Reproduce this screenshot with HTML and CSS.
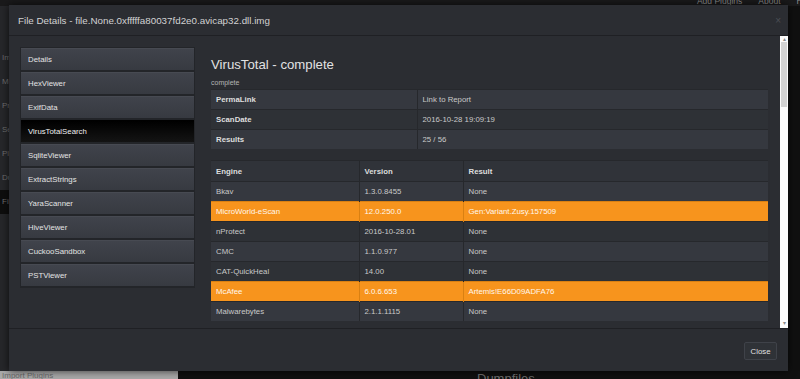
FILE: index.html
```html
<!DOCTYPE html>
<html>
<head>
<meta charset="utf-8">
<link rel="stylesheet" href="styles.css">
</head>
<body>
<div class="app">
  <header class="topbar">
    <nav class="toplinks"><span>Add Plugins</span><span>About</span><span>Help</span></nav>
  </header>
  <div class="layout">
    <aside class="side">
      <div class="side-item">Image</div>
      <div class="side-item">Memory</div>
      <div class="side-item">Profile</div>
      <div class="side-item">Session</div>
      <div class="side-item">Plugins</div>
      <div class="side-item">Dump</div>
      <div class="side-item dark">Files</div>
      <div class="side-item light">Import Plugins</div>
    </aside>
    <main class="main">
      <h2 class="dump">Dumpfiles</h2>
    </main>
  </div>
</div>

<div class="modal">
  <div class="modal-header">
    <span class="modal-title">File Details - file.None.0xfffffa80037fd2e0.avicap32.dll.img</span>
    <span class="modal-x">×</span>
  </div>
  <div class="modal-body">
    <div class="body-main">
      <ul class="nav">
        <li class="nav-item">Details</li>
        <li class="nav-item">HexViewer</li>
        <li class="nav-item">ExifData</li>
        <li class="nav-item active">VirusTotalSearch</li>
        <li class="nav-item">SqliteViewer</li>
        <li class="nav-item">ExtractStrings</li>
        <li class="nav-item">YaraScanner</li>
        <li class="nav-item">HiveViewer</li>
        <li class="nav-item">CuckooSandbox</li>
        <li class="nav-item">PSTViewer</li>
      </ul>
      <section class="content">
        <h2 class="vt-title">VirusTotal - complete</h2>
        <div class="vt-sub">complete</div>
        <table class="tbl info">
          <colgroup><col class="c-label"><col></colgroup>
          <tr class="alt"><td class="b">PermaLink</td><td>Link to Report</td></tr>
          <tr><td class="b">ScanDate</td><td>2016-10-28 19:09:19</td></tr>
          <tr class="alt"><td class="b">Results</td><td>25 / 56</td></tr>
        </table>
        <table class="tbl engines">
          <colgroup><col class="c-engine"><col class="c-version"><col></colgroup>
          <tr class="head"><td class="b">Engine</td><td class="b">Version</td><td class="b">Result</td></tr>
          <tr class="alt"><td>Bkav</td><td>1.3.0.8455</td><td>None</td></tr>
          <tr class="hit"><td>MicroWorld-eScan</td><td>12.0.250.0</td><td>Gen:Variant.Zusy.157509</td></tr>
          <tr><td>nProtect</td><td>2016-10-28.01</td><td>None</td></tr>
          <tr class="alt"><td>CMC</td><td>1.1.0.977</td><td>None</td></tr>
          <tr><td>CAT-QuickHeal</td><td>14.00</td><td>None</td></tr>
          <tr class="hit"><td>McAfee</td><td>6.0.6.653</td><td>Artemis!E66D09ADFA76</td></tr>
          <tr class="alt"><td>Malwarebytes</td><td>2.1.1.1115</td><td>None</td></tr>
        </table>
      </section>
    </div>
    <div class="scrollbar">
      <div class="sb-arrow">▴</div>
      <div class="sb-thumb"></div>
      <div class="sb-track"></div>
      <div class="sb-arrow">▾</div>
    </div>
  </div>
  <div class="modal-footer">
    <button class="btn">Close</button>
  </div>
</div>
</body>
</html>
```

FILE: styles.css
```css
html, body {
  margin: 0;
  padding: 0;
}
body {
  width: 800px;
  height: 379px;
  overflow: hidden;
  position: relative;
  background: #141414;
  font-family: "Liberation Sans", Arial, sans-serif;
}

/* background page */
.app {
  display: flex;
  flex-direction: column;
  height: 379px;
}
.topbar {
  height: 6px;
  background: #1a1a1b;
  display: flex;
  justify-content: flex-end;
  align-items: flex-end;
  overflow: hidden;
  flex: none;
}
.toplinks {
  display: flex;
  gap: 16px;
  margin-right: -14px;
  font-size: 8.5px;
  line-height: 10px;
  color: #8c8c8c;
}
.layout {
  flex: 1;
  display: flex;
  min-height: 0;
}
.side {
  width: 178px;
  background: #26272a;
  display: flex;
  flex-direction: column;
  padding-top: 40px;
  box-sizing: border-box;
}
.side-item {
  height: 24px;
  color: #6e6e6e;
  font-size: 8px;
  padding-left: 2px;
  line-height: 24px;
  overflow: hidden;
  white-space: nowrap;
}
.side-item.dark {
  background: #0e0e0e;
}
.side-item.light {
  margin-top: auto;
  background: #a9a9a9;
  color: #6a6a6a;
  height: 8px;
  line-height: 10px;
}
.main {
  flex: 1;
  background: #101010;
  padding: 365px 0 0 299px;
  overflow: hidden;
}
.dump {
  margin: 0;
  font-size: 13px;
  line-height: 16px;
  font-weight: normal;
  color: #6f6f6f;
}

/* modal */
.modal {
  position: absolute;
  left: 9px;
  top: 5px;
  width: 779px;
  height: 366px;
  background: #2b2d32;
  box-shadow: 0 0 8px rgba(0, 0, 0, 0.7);
  display: flex;
  flex-direction: column;
}
.modal-header {
  height: 30px;
  border-bottom: 1px solid #1f2024;
  display: flex;
  align-items: center;
  justify-content: space-between;
  padding: 0 7px 0 9px;
  flex: none;
}
.modal-title {
  font-size: 9.8px;
  color: #d2d2d2;
}
.modal-x {
  font-size: 10px;
  color: #4c4e54;
}
.modal-body {
  height: 292px;
  flex: none;
  display: flex;
}
.body-main {
  flex: 1;
  display: flex;
  align-items: flex-start;
  padding: 11px 12px 0 11px;
  overflow: hidden;
}
.nav {
  list-style: none;
  margin: 0;
  padding: 1px 1px 2px;
  width: 175px;
  box-sizing: border-box;
  background: #232529;
  display: flex;
  flex-direction: column;
  gap: 2px;
  flex: none;
}
.nav-item {
  height: 22px;
  box-sizing: border-box;
  padding-left: 7px;
  display: flex;
  align-items: center;
  font-size: 7.8px;
  color: #e4e4e4;
  background: linear-gradient(#40434b, #373a41);
  border-top: 1px solid #474a52;
}
.nav-item.active {
  background: linear-gradient(#000, #141414);
  border-top-color: #000;
  color: #f0f0f0;
}
.content {
  flex: 1;
  margin-left: 16px;
}
.vt-title {
  margin: 10px 0 5px;
  font-size: 13.2px;
  line-height: 16px;
  font-weight: normal;
  color: #e2e2e2;
}
.vt-sub {
  font-size: 7px;
  line-height: 10px;
  color: #b4b4b4;
  margin-bottom: 1px;
}
.tbl {
  width: 100%;
  border-collapse: collapse;
  table-layout: fixed;
  font-size: 7.8px;
  color: #c9c9c9;
}
.tbl td {
  height: 19px;
  padding: 0 5px;
  border-top: 1px solid #26282c;
  border-left: 1px solid #26282c;
  white-space: nowrap;
  overflow: hidden;
}
.tbl td:first-child {
  border-left: none;
}
.tbl tr {
  background: #2e3136;
}
.tbl tr.alt {
  background: #35383f;
}
.tbl td.b {
  font-weight: bold;
  color: #dedede;
}
.c-label {
  width: 206px;
}
.engines {
  margin-top: 11px;
}
.c-engine {
  width: 148px;
}
.c-version {
  width: 104px;
}
.engines tr.head {
  background: #303339;
}
.engines tr.head td {
  height: 20px;
}
.engines tr.hit {
  background: #f7941d;
  color: #fff8ee;
}
.engines tr.hit td {
  border-color: #d98012;
}

/* scrollbar */
.scrollbar {
  width: 8px;
  flex: none;
  background: #fbfbfb;
  display: flex;
  flex-direction: column;
  padding-bottom: 2px;
  box-sizing: border-box;
}
.sb-arrow {
  height: 6px;
  font-size: 6px;
  line-height: 6px;
  text-align: center;
  color: #8a8a8a;
}
.sb-thumb {
  height: 65px;
  margin: 0 1px;
  background: #d2d2d2;
}
.sb-track {
  flex: 1;
}

.modal-footer {
  flex: 1;
  border-top: 1px solid #1f2024;
  display: flex;
  justify-content: flex-end;
  align-items: flex-start;
  padding: 13px 11px 0;
}
.btn {
  width: 33px;
  height: 18px;
  padding: 0;
  background: #2f3237;
  border: 1px solid #3f4249;
  border-radius: 2px;
  color: #e0e0e0;
  font-family: "Liberation Sans", Arial, sans-serif;
  font-size: 7.8px;
}
```
